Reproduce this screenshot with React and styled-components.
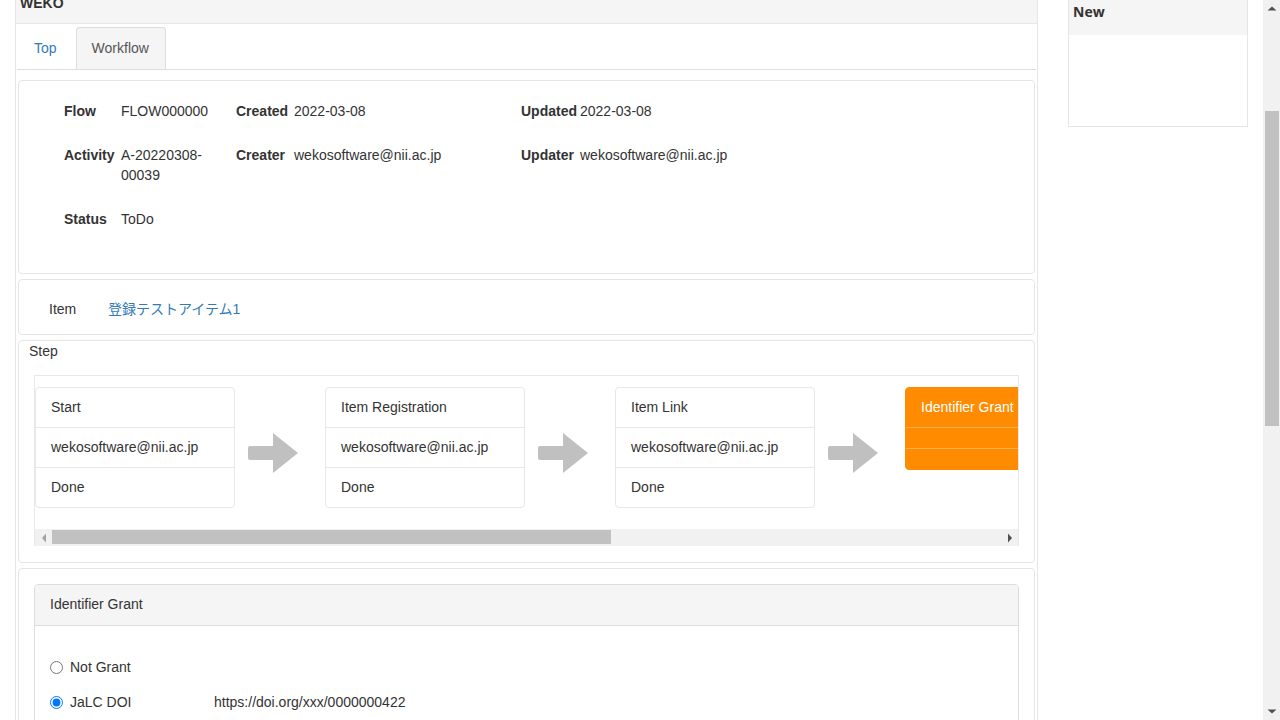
import React from "react";
import styled, { createGlobalStyle } from "styled-components";

const Global = createGlobalStyle`
  html, body { margin: 0; padding: 0; background: #fff; overflow: hidden; }
  body {
    font-family: "Liberation Sans", Arial, "Noto Sans CJK JP", sans-serif;
    font-size: 14px;
    line-height: 20px;
    color: #333;
  }
  * { box-sizing: border-box; }
`;

const Screen = styled.div`
  display: flex;
  width: 1280px;
  height: 720px;
  overflow: hidden;
`;

const Viewport = styled.div`
  flex: 1;
  height: 720px;
  overflow: hidden;
`;

const Page = styled.div`
  display: flex;
  align-items: flex-start;
  gap: 30px;
  padding-left: 15px;
  margin-top: -17px;
`;

const MainColumn = styled.div`
  width: 1023px;
  flex-shrink: 0;
  border-left: 1px solid #e7e7e7;
  border-right: 1px solid #e7e7e7;
  padding-bottom: 60px;
`;

const MainHeader = styled.div`
  background: #f5f5f5;
  border-bottom: 1px solid #e7e7e7;
  padding: 10px 4px;
  font-weight: bold;
  height: 41px;
`;

const MainBody = styled.div`
  padding: 3px 1px 0;
`;

const Tabs = styled.ul`
  display: flex;
  list-style: none;
  margin: 0;
  padding: 0;
  border-bottom: 1px solid #ddd;
`;

const Tab = styled.li`
  margin: 0 2px 0 0;
  padding: 10px 16px 10px ${(p) => (p.$active ? 15 : 16)}px;
  border: 1px solid ${(p) => (p.$active ? "#ddd" : "transparent")};
  border-bottom-color: transparent;
  border-radius: 4px 4px 0 0;
  background: ${(p) => (p.$active ? "#f5f5f5" : "transparent")};
  color: ${(p) => (p.$active ? "#555" : "#337ab7")};
`;

const Panel = styled.div`
  margin: ${(p) => p.$mt || 5}px 1px 0;
  border: 1px solid #e5e5e5;
  border-radius: 4px;
  background: #fff;
`;

const InfoGrid = styled.div`
  display: grid;
  grid-template-columns: 57px 115px 58px 227px 59px 1fr;
  row-gap: 24px;
  padding: 20px 0 44px 45px;
`;

const Label = styled.div`
  font-weight: bold;
  white-space: nowrap;
`;

const Value = styled.div`
  padding-right: ${(p) => p.$pr || 0}px;
`;

const ItemRow = styled.div`
  display: grid;
  grid-template-columns: 59px 1fr;
  padding: 19px 0 15px 30px;
`;

const Link = styled.a`
  color: #337ab7;
  text-decoration: none;
  font-family: "Liberation Sans", Arial, "Noto Sans CJK JP", sans-serif;
`;

const StepTitle = styled.div`
  padding: 0 10px;
`;

const StepBox = styled.div`
  margin: 14px 15px 16px;
  border: 1px solid #e8e8e8;
  border-bottom: none;
  overflow: hidden;
`;

const StepTrack = styled.div`
  display: flex;
  align-items: center;
  padding: 11px 0 21px;
  overflow: hidden;
`;

const StepCard = styled.div`
  width: 200px;
  flex-shrink: 0;
  align-self: flex-start;
  border: 1px solid ${(p) => (p.$current ? "#ff8c00" : "#e8e8e8")};
  border-radius: 4px;
  background: ${(p) => (p.$current ? "#ff8c00" : "#fff")};
  color: ${(p) => (p.$current ? "#fff" : "#333")};
  overflow: hidden;
`;

const StepLine = styled.div`
  padding: 10px 15px;
  line-height: 19px;
  height: ${(p) => (p.$empty ? "21px" : "auto")};
  white-space: nowrap;
  border-top: 1px solid ${(p) => (p.$current ? "#ffad52" : "#e8e8e8")};
  &:first-child { border-top: none; }
`;

const ArrowCell = styled.div`
  width: 90px;
  flex-shrink: 0;
  padding-left: 13px;
  margin-top: 11px;
  display: flex;
`;

const HScroll = styled.div`
  display: flex;
  height: 17px;
  background: #f1f1f1;
`;

const ScrollBtn = styled.div`
  width: 17px;
  height: 17px;
  flex-shrink: 0;
  display: flex;
  align-items: center;
  justify-content: center;
`;

const HThumb = styled.div`
  width: 559px;
  height: 14px;
  margin-top: 1px;
  background: #c1c1c1;
`;

const Spacer = styled.div`
  flex: 1;
`;

const SubPanel = styled.div`
  margin: 15px 15px 20px;
  border: 1px solid #ddd;
  border-radius: 4px;
  background: #fff;
`;

const SubHeader = styled.div`
  padding: 9px 15px 10px;
  height: 41px;
  background: #f5f5f5;
  border-bottom: 1px solid #ddd;
  border-radius: 3px 3px 0 0;
`;

const SubBody = styled.div`
  display: flex;
  flex-direction: column;
  gap: 15px;
  padding: 31px 15px 40px;
`;

const RadioRow = styled.label`
  display: grid;
  grid-template-columns: 164px 1fr;
  align-items: center;
`;

const RadioLabel = styled.span`
  display: flex;
  align-items: center;
`;

const Radio = styled.input`
  width: 13px;
  height: 13px;
  margin: 0 7px 0 0;
  accent-color: #0075ff;
`;

const Sidebar = styled.div`
  width: 180px;
  flex-shrink: 0;
  margin-top: 11px;
  border: 1px solid #e5e5e5;
`;

const SideHeader = styled.div`
  background: #f5f5f5;
  padding: 7px 4px 0;
  font-weight: bold;
  height: 40px;
  font-family: "Open Sans", "Liberation Sans", sans-serif;
`;

const SideBody = styled.div`
  height: 91px;
`;

const VScroll = styled.div`
  width: 17px;
  height: 720px;
  flex-shrink: 0;
  background: #f1f1f1;
  display: flex;
  flex-direction: column;
`;

const VTrack = styled.div`
  flex: 1;
  padding-top: 94px;
  display: flex;
  justify-content: center;
`;

const VThumb = styled.div`
  width: 14px;
  height: 315px;
  background: #c1c1c1;
`;

const Tri = ({ dir, color = "#505050" }) => {
  const pts = {
    left: "6,4.5 2,0 6,-4.5",
    right: "0,-4.5 4,0 0,4.5",
    up: "-4.5,2.5 0,-1.5 4.5,2.5",
    down: "-4.5,-1.5 0,2.5 4.5,-1.5",
  };
  const vb = { left: "0 -5 8 10", right: "-2 -5 8 10", up: "-5 -3 10 7", down: "-5 -3 10 7" };
  const size = dir === "left" || dir === "right" ? { w: 8, h: 10 } : { w: 10, h: 7 };
  return (
    <svg width={size.w} height={size.h} viewBox={vb[dir]}>
      <polygon points={pts[dir]} fill={color} />
    </svg>
  );
};

const Arrow = () => (
  <svg width="50" height="40" viewBox="0 0 50 40">
    <rect x="0" y="13" width="28" height="14" rx="2" fill="#c0c0c0" />
    <polygon points="25,0 50,20 25,40" fill="#c0c0c0" />
  </svg>
);

const steps = [
  { name: "Start", user: "wekosoftware@nii.ac.jp", status: "Done" },
  { name: "Item Registration", user: "wekosoftware@nii.ac.jp", status: "Done" },
  { name: "Item Link", user: "wekosoftware@nii.ac.jp", status: "Done" },
  { name: "Identifier Grant", user: "", status: "", current: true },
  { name: "Approval", user: "", status: "" },
];

export default function App() {
  return (
    <>
      <Global />
      <Screen>
        <Viewport>
          <Page>
            <MainColumn>
              <MainHeader>WEKO</MainHeader>
              <MainBody>
                <Tabs>
                  <Tab>Top</Tab>
                  <Tab $active>Workflow</Tab>
                </Tabs>

                <Panel $mt={10}>
                  <InfoGrid>
                    <Label>Flow</Label>
                    <Value>FLOW000000</Value>
                    <Label>Created</Label>
                    <Value>2022-03-08</Value>
                    <Label>Updated</Label>
                    <Value>2022-03-08</Value>

                    <Label>Activity</Label>
                    <Value $pr={12}>A-20220308-00039</Value>
                    <Label>Creater</Label>
                    <Value>wekosoftware@nii.ac.jp</Value>
                    <Label>Updater</Label>
                    <Value>wekosoftware@nii.ac.jp</Value>

                    <Label>Status</Label>
                    <Value>ToDo</Value>
                  </InfoGrid>
                </Panel>

                <Panel>
                  <ItemRow>
                    <span>Item</span>
                    <Link href="#">登録テストアイテム1</Link>
                  </ItemRow>
                </Panel>

                <Panel>
                  <StepTitle>Step</StepTitle>
                  <StepBox>
                    <StepTrack>
                      {steps.map((s, i) => (
                        <React.Fragment key={s.name}>
                          {i > 0 && (
                            <ArrowCell>
                              <Arrow />
                            </ArrowCell>
                          )}
                          <StepCard $current={s.current}>
                            <StepLine $current={s.current}>{s.name}</StepLine>
                            <StepLine $current={s.current} $empty={!s.user}>
                              {s.user}
                            </StepLine>
                            <StepLine $current={s.current} $empty={!s.status}>
                              {s.status}
                            </StepLine>
                          </StepCard>
                        </React.Fragment>
                      ))}
                    </StepTrack>
                    <HScroll>
                      <ScrollBtn>
                        <Tri dir="left" color="#a3a3a3" />
                      </ScrollBtn>
                      <HThumb />
                      <Spacer />
                      <ScrollBtn>
                        <Tri dir="right" />
                      </ScrollBtn>
                    </HScroll>
                  </StepBox>
                </Panel>

                <Panel>
                  <SubPanel>
                    <SubHeader>Identifier Grant</SubHeader>
                    <SubBody>
                      <RadioRow>
                        <RadioLabel>
                          <Radio type="radio" name="grant" />
                          Not Grant
                        </RadioLabel>
                        <span />
                      </RadioRow>
                      <RadioRow>
                        <RadioLabel>
                          <Radio type="radio" name="grant" defaultChecked />
                          JaLC DOI
                        </RadioLabel>
                        <span>https://doi.org/xxx/0000000422</span>
                      </RadioRow>
                      <RadioRow>
                        <RadioLabel>
                          <Radio type="radio" name="grant" />
                          Crossref DOI
                        </RadioLabel>
                        <span>https://doi.org/xxx/0000000422</span>
                      </RadioRow>
                    </SubBody>
                  </SubPanel>
                </Panel>
              </MainBody>
            </MainColumn>

            <Sidebar>
              <SideHeader>New</SideHeader>
              <SideBody />
            </Sidebar>
          </Page>
        </Viewport>
        <VScroll>
          <ScrollBtn>
            <Tri dir="up" />
          </ScrollBtn>
          <VTrack>
            <VThumb />
          </VTrack>
          <ScrollBtn>
            <Tri dir="down" />
          </ScrollBtn>
        </VScroll>
      </Screen>
    </>
  );
}
